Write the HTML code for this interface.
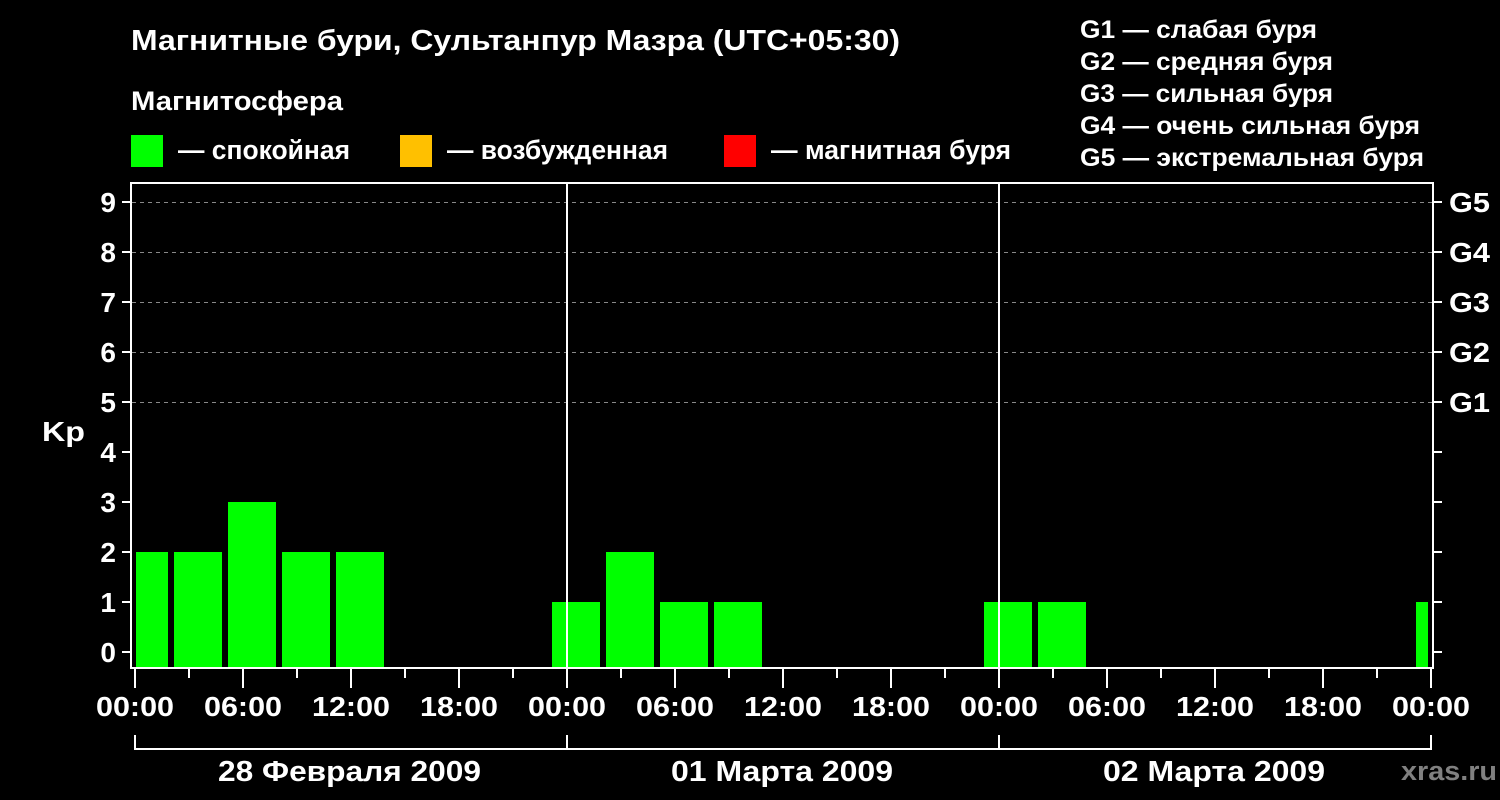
<!DOCTYPE html>
<html><head><meta charset="utf-8"><style>
html,body{margin:0;padding:0;background:#000;width:1500px;height:800px;overflow:hidden}
svg{display:block}
text{font-family:"Liberation Sans",Arial,sans-serif;font-weight:bold;fill:#fff}
</style></head><body>
<svg width="1500" height="800" viewBox="0 0 1500 800" xmlns="http://www.w3.org/2000/svg">
<rect width="1500" height="800" fill="#000"/>
<text x="131" y="50" font-size="29" textLength="769" lengthAdjust="spacingAndGlyphs">Магнитные бури, Сультанпур Мазра (UTC+05:30)</text>
<text x="131" y="110" font-size="27" textLength="212" lengthAdjust="spacingAndGlyphs">Магнитосфера</text>
<rect x="131" y="135" width="32" height="32" fill="#00ff00"/>
<text x="178" y="159" font-size="27" textLength="172" lengthAdjust="spacingAndGlyphs">— спокойная</text>
<rect x="400" y="135" width="32" height="32" fill="#ffc000"/>
<text x="447" y="159" font-size="27" textLength="221" lengthAdjust="spacingAndGlyphs">— возбужденная</text>
<rect x="724" y="135" width="32" height="32" fill="#ff0000"/>
<text x="771" y="159" font-size="27" textLength="240" lengthAdjust="spacingAndGlyphs">— магнитная буря</text>
<g font-size="25">
<text x="1080" y="38" textLength="237" lengthAdjust="spacingAndGlyphs">G1 — слабая буря</text>
<text x="1080" y="70" textLength="253" lengthAdjust="spacingAndGlyphs">G2 — средняя буря</text>
<text x="1080" y="102" textLength="253" lengthAdjust="spacingAndGlyphs">G3 — сильная буря</text>
<text x="1080" y="134" textLength="340" lengthAdjust="spacingAndGlyphs">G4 — очень сильная буря</text>
<text x="1080" y="166" textLength="344" lengthAdjust="spacingAndGlyphs">G5 — экстремальная буря</text>
</g>
<g stroke="#888" stroke-width="1" stroke-dasharray="4,4">
<line x1="132" y1="202.5" x2="1432" y2="202.5"/>
<line x1="132" y1="252.5" x2="1432" y2="252.5"/>
<line x1="132" y1="302.5" x2="1432" y2="302.5"/>
<line x1="132" y1="352.5" x2="1432" y2="352.5"/>
<line x1="132" y1="402.5" x2="1432" y2="402.5"/>
</g>
<g fill="#00ff00">
<rect x="136" y="552" width="32" height="116"/>
<rect x="174" y="552" width="48" height="116"/>
<rect x="228" y="502" width="48" height="166"/>
<rect x="282" y="552" width="48" height="116"/>
<rect x="336" y="552" width="48" height="116"/>
<rect x="552" y="602" width="48" height="66"/>
<rect x="606" y="552" width="48" height="116"/>
<rect x="660" y="602" width="48" height="66"/>
<rect x="714" y="602" width="48" height="66"/>
<rect x="984" y="602" width="48" height="66"/>
<rect x="1038" y="602" width="48" height="66"/>
<rect x="1416" y="602" width="12" height="66"/>
</g>
<g stroke="#fff" stroke-width="2" fill="none">
<rect x="131" y="183" width="1302" height="485"/>
<line x1="567" y1="183" x2="567" y2="668"/>
<line x1="999" y1="183" x2="999" y2="668"/>
<path d="M122 202H131M122 252H131M122 302H131M122 352H131M122 402H131M122 452H131M122 502H131M122 552H131M122 602H131M122 652H131"/>
<path d="M1433 202H1442M1433 252H1442M1433 302H1442M1433 352H1442M1433 402H1442M1433 452H1442M1433 502H1442M1433 552H1442M1433 602H1442M1433 652H1442"/>
<path d="M135 668V688M243 668V688M351 668V688M459 668V688M567 668V688M675 668V688M783 668V688M891 668V688M999 668V688M1107 668V688M1215 668V688M1323 668V688M1431 668V688"/>
<path d="M189 668V678M297 668V678M405 668V678M513 668V678M621 668V678M729 668V678M837 668V678M945 668V678M1053 668V678M1161 668V678M1269 668V678M1377 668V678"/>
<path d="M135 735V749H1431V735M567 735V749M999 735V749"/>
</g>
<g font-size="28" text-anchor="end">
<text x="116" y="212">9</text><text x="116" y="262">8</text><text x="116" y="312">7</text>
<text x="116" y="362">6</text><text x="116" y="412">5</text><text x="116" y="462">4</text>
<text x="116" y="512">3</text><text x="116" y="562">2</text><text x="116" y="612">1</text>
<text x="116" y="662">0</text>
</g>
<text x="42" y="441" font-size="28" textLength="43" lengthAdjust="spacingAndGlyphs">Kp</text>
<g font-size="28">
<text x="1449" y="212" textLength="41" lengthAdjust="spacingAndGlyphs">G5</text>
<text x="1449" y="262" textLength="41" lengthAdjust="spacingAndGlyphs">G4</text>
<text x="1449" y="312" textLength="41" lengthAdjust="spacingAndGlyphs">G3</text>
<text x="1449" y="362" textLength="41" lengthAdjust="spacingAndGlyphs">G2</text>
<text x="1449" y="412" textLength="41" lengthAdjust="spacingAndGlyphs">G1</text>
</g>
<g font-size="28" text-anchor="middle">
<text x="135" y="716" textLength="78" lengthAdjust="spacingAndGlyphs">00:00</text>
<text x="243" y="716" textLength="78" lengthAdjust="spacingAndGlyphs">06:00</text>
<text x="351" y="716" textLength="78" lengthAdjust="spacingAndGlyphs">12:00</text>
<text x="459" y="716" textLength="78" lengthAdjust="spacingAndGlyphs">18:00</text>
<text x="567" y="716" textLength="78" lengthAdjust="spacingAndGlyphs">00:00</text>
<text x="675" y="716" textLength="78" lengthAdjust="spacingAndGlyphs">06:00</text>
<text x="783" y="716" textLength="78" lengthAdjust="spacingAndGlyphs">12:00</text>
<text x="891" y="716" textLength="78" lengthAdjust="spacingAndGlyphs">18:00</text>
<text x="999" y="716" textLength="78" lengthAdjust="spacingAndGlyphs">00:00</text>
<text x="1107" y="716" textLength="78" lengthAdjust="spacingAndGlyphs">06:00</text>
<text x="1215" y="716" textLength="78" lengthAdjust="spacingAndGlyphs">12:00</text>
<text x="1323" y="716" textLength="78" lengthAdjust="spacingAndGlyphs">18:00</text>
<text x="1431" y="716" textLength="78" lengthAdjust="spacingAndGlyphs">00:00</text>
</g>
<g font-size="29">
<text x="218" y="781" textLength="263" lengthAdjust="spacingAndGlyphs">28 Февраля 2009</text>
<text x="671" y="781" textLength="222" lengthAdjust="spacingAndGlyphs">01 Марта 2009</text>
<text x="1103" y="781" textLength="222" lengthAdjust="spacingAndGlyphs">02 Марта 2009</text>
</g>
<text x="1401" y="780" font-size="27" style="fill:#808080" textLength="96" lengthAdjust="spacingAndGlyphs">xras.ru</text>
</svg>
</body></html>
